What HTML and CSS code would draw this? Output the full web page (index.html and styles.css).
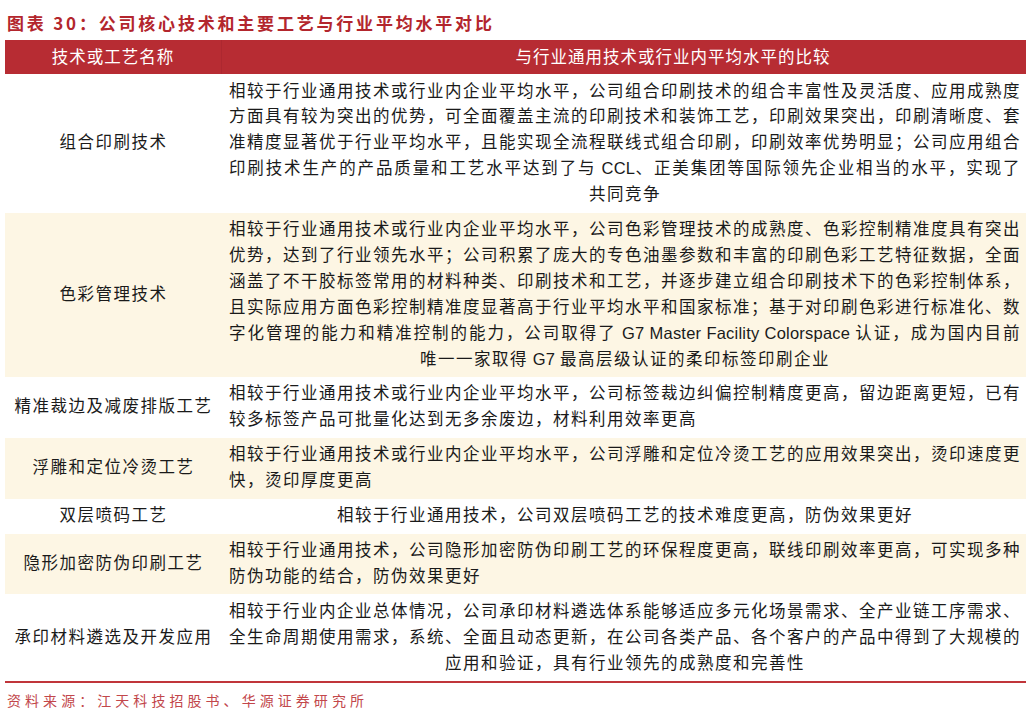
FILE: index.html
```html
<!DOCTYPE html>
<html lang="zh-CN">
<head>
<meta charset="utf-8">
<title>图表 30</title>
<link rel="stylesheet" href="styles.css">
</head>
<body>
<div class="page">
  <div class="title">图表 30：公司核心技术和主要工艺与行业平均水平对比</div>
  <div class="table">
    <div class="row head">
      <div class="name">技术或工艺名称</div>
      <div class="desc">与行业通用技术或行业内平均水平的比较</div>
    </div>
    <div class="row">
      <div class="name">组合印刷技术</div>
      <div class="desc">
        <span class="ln">相较于行业通用技术或行业内企业平均水平，公司组合印刷技术的组合丰富性及灵活度、应用成熟度</span>
        <span class="ln">方面具有较为突出的优势，可全面覆盖主流的印刷技术和装饰工艺，印刷效果突出，印刷清晰度、套</span>
        <span class="ln">准精度显著优于行业平均水平，且能实现全流程联线式组合印刷，印刷效率优势明显；公司应用组合</span>
        <span class="ln">印刷技术生产的产品质量和工艺水平达到了与<span class="latin"> CCL</span>、正美集团等国际领先企业相当的水平，实现了</span>
        <span class="ln end">共同竞争</span>
      </div>
    </div>
    <div class="row alt">
      <div class="name">色彩管理技术</div>
      <div class="desc">
        <span class="ln">相较于行业通用技术或行业内企业平均水平，公司色彩管理技术的成熟度、色彩控制精准度具有突出</span>
        <span class="ln">优势，达到了行业领先水平；公司积累了庞大的专色油墨参数和丰富的印刷色彩工艺特征数据，全面</span>
        <span class="ln">涵盖了不干胶标签常用的材料种类、印刷技术和工艺，并逐步建立组合印刷技术下的色彩控制体系，</span>
        <span class="ln">且实际应用方面色彩控制精准度显著高于行业平均水平和国家标准；基于对印刷色彩进行标准化、数</span>
        <span class="ln">字化管理的能力和精准控制的能力，公司取得了<span class="latin"> G7 Master Facility Colorspace </span>认证，成为国内目前</span>
        <span class="ln end">唯一一家取得<span class="latin"> G7 </span>最高层级认证的柔印标签印刷企业</span>
      </div>
    </div>
    <div class="row">
      <div class="name">精准裁边及减废排版工艺</div>
      <div class="desc left">
        <span class="ln">相较于行业通用技术或行业内企业平均水平，公司标签裁边纠偏控制精度更高，留边距离更短，已有</span>
        <span class="ln end">较多标签产品可批量化达到无多余废边，材料利用效率更高</span>
      </div>
    </div>
    <div class="row alt">
      <div class="name">浮雕和定位冷烫工艺</div>
      <div class="desc left">
        <span class="ln">相较于行业通用技术或行业内企业平均水平，公司浮雕和定位冷烫工艺的应用效果突出，烫印速度更</span>
        <span class="ln end">快，烫印厚度更高</span>
      </div>
    </div>
    <div class="row">
      <div class="name">双层喷码工艺</div>
      <div class="desc">
        <span class="ln end">相较于行业通用技术，公司双层喷码工艺的技术难度更高，防伪效果更好</span>
      </div>
    </div>
    <div class="row alt">
      <div class="name">隐形加密防伪印刷工艺</div>
      <div class="desc left">
        <span class="ln">相较于行业通用技术，公司隐形加密防伪印刷工艺的环保程度更高，联线印刷效率更高，可实现多种</span>
        <span class="ln end">防伪功能的结合，防伪效果更好</span>
      </div>
    </div>
    <div class="row">
      <div class="name">承印材料遴选及开发应用</div>
      <div class="desc">
        <span class="ln">相较于行业内企业总体情况，公司承印材料遴选体系能够适应多元化场景需求、全产业链工序需求、</span>
        <span class="ln">全生命周期使用需求，系统、全面且动态更新，在公司各类产品、各个客户的产品中得到了大规模的</span>
        <span class="ln end">应用和验证，具有行业领先的成熟度和完善性</span>
      </div>
    </div>
  </div>
  <div class="source">资料来源：江天科技招股书、华源证券研究所</div>
</div>
</body>
</html>
```

FILE: styles.css
```css
html, body {
  margin: 0;
  padding: 0;
  background: #ffffff;
}

.page {
  width: 1031px;
  padding: 0 5px;
  box-sizing: border-box;
  font-family: "Liberation Sans", "Noto Sans CJK SC", sans-serif;
  color: #1a1a1a;
}

.title {
  height: 40px;
  box-sizing: border-box;
  padding: 11px 0 0 2px;
  font-family: "Noto Sans CJK SC", sans-serif;
  font-size: 17px;
  font-weight: bold;
  line-height: 24px;
  letter-spacing: 2.8px;
  color: #b3262d;
  white-space: nowrap;
}

.table {
  display: flex;
  flex-direction: column;
  border-bottom: 2px solid #c0353a;
}

.row {
  display: grid;
  grid-template-columns: 217px 1fr;
  background: #ffffff;
}

.row.alt {
  background: #fdf6e4;
}

.row.head {
  background: #b72c33;
  color: #ffffff;
  height: 34px;
}

.name {
  display: flex;
  align-items: center;
  justify-content: center;
  font-size: 16.5px;
  letter-spacing: 1.5px;
  line-height: 25.9px;
  text-align: center;
  white-space: nowrap;
}

.desc {
  padding: 4.5px 5px 4.5px 7px;
  font-size: 16.5px;
  line-height: 25.9px;
  letter-spacing: 1.5px;
  white-space: nowrap;
}

.ln {
  display: block;
  text-align: justify;
  text-align-last: justify;
}

.ln.end {
  text-align: center;
  text-align-last: center;
}

.desc.left .ln.end {
  text-align: left;
  text-align-last: left;
}

.latin {
  letter-spacing: 0.2px;
}

.row.head .name {
  border-right: 1px solid #ad2830;
  line-height: 34px;
  letter-spacing: 1px;
}

.row.head .desc {
  padding: 0 0 0 98px;
  line-height: 34px;
  letter-spacing: 1px;
  text-align: center;
}

.source {
  margin-top: 7px;
  padding-left: 2px;
  font-family: "Noto Sans CJK SC", serif;
  font-size: 14px;
  line-height: 20px;
  letter-spacing: 4.05px;
  color: #c2474b;
  white-space: nowrap;
}
```
